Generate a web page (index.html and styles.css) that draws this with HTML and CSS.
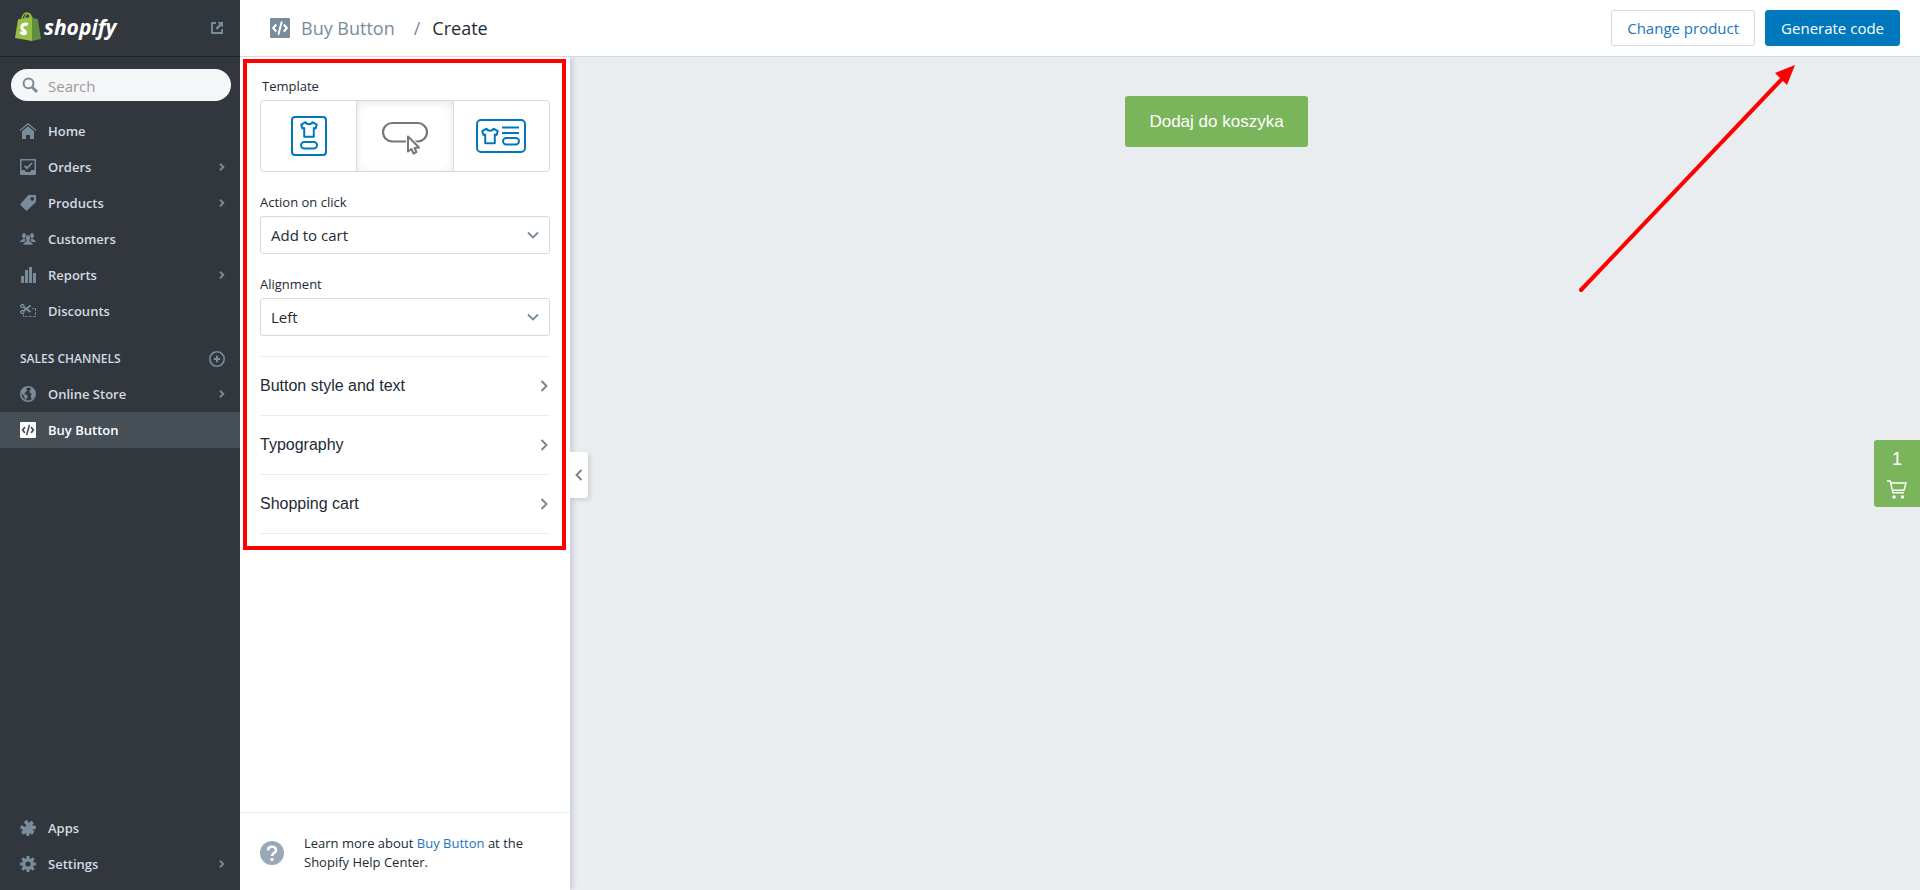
FILE: index.html
```html
<!DOCTYPE html>
<html lang="en">
<head>
<meta charset="utf-8">
<title>Buy Button / Create</title>
<link rel="stylesheet" href="styles.css">
</head>
<body>
<svg class="sprite" aria-hidden="true">
  <symbol id="chevron" viewBox="0 0 8 12"><path d="M1.500 1 6.500 6 1.500 11" fill="none" stroke="currentColor" stroke-width="1.900"/></symbol>
  <symbol id="nav-chevron" viewBox="0 0 6 8"><path d="M1 .8 4.3 4 1 7.2" fill="none" stroke="currentColor" stroke-width="1.9"/></symbol>
  <symbol id="code" viewBox="0 0 16 16"><path fill="currentColor" fill-rule="evenodd" d="M1 0h14a1 1 0 0 1 1 1v14a1 1 0 0 1-1 1H1a1 1 0 0 1-1-1V1a1 1 0 0 1 1-1zM4.300 4.600 1.500 8l2.800 3.400 1.300-1.100L3.700 8l1.900-2.300zM11.700 4.600l-1.300 1.100L12.300 8l-1.900 2.300 1.300 1.100L14.500 8zM8.700 2.600 5.900 13.100l1.500.4L10.200 3z"/></symbol>
  <symbol id="shirt" viewBox="0 0 18 17"><path d="M5.500 1.200 1.200 3.600 2.400 7.400 4.200 6.900V15.800H13.800V6.900L15.600 7.400 16.800 3.600 12.500 1.200C11.500 4 6.500 4 5.500 1.200Z" fill="none" stroke="currentColor" stroke-width="2" stroke-linejoin="round"/></symbol>
</svg>
<div class="app">
  <aside class="sidebar">
    <div class="brand">
      <a class="logo" href="#" aria-label="shopify">
        <svg width="26" height="29" viewBox="0 0 26 29" aria-hidden="true">
          <path d="M7 8C7 3 9.500.8 11.500.8S15 3.500 15.300 7M9.500 7C10 3 12 1.200 13.500 1.500S16.500 4 16.500 6" fill="none" stroke="#95bf47" stroke-width="1.300"/>
          <path d="M3 7.500 17 4.500V29L0 26Z" fill="#95bf47"/>
          <path d="M17 4.500 19 6.500 22.800 7 26 27 17 29Z" fill="#5e8e3e"/>
          <path d="M12.800 11.200C9.500 9.700 6.500 11.500 6.800 14.200S11 17.200 10.500 19.200 7.300 20 5.200 18.800" transform="translate(0 1.500)" fill="none" stroke="#fff" stroke-width="3"/>
        </svg>
        <span>shopify</span>
      </a>
      <a class="external" href="#" aria-label="View your website">
        <svg width="12" height="12" viewBox="0 0 12 12" aria-hidden="true"><path d="M5 1H1V11H11V7" fill="none" stroke="currentColor" stroke-width="1.900"/><path d="M6.500 0H12V5.500L10.200 3.700 6.200 7.700 4.600 6.100 8.500 2.100Z" fill="currentColor"/></svg>
      </a>
    </div>
    <label class="search">
      <svg width="17" height="17" viewBox="0 0 17 17" aria-hidden="true"><circle cx="6.500" cy="6.300" r="4.900" fill="none" stroke="currentColor" stroke-width="2"/><path d="M10 10 15 15" stroke="currentColor" stroke-width="3"/></svg>
      <input type="search" placeholder="Search" aria-label="Search">
    </label>
    <nav class="nav" aria-label="Main">
      <a href="#"><svg class="icon" viewBox="0 0 16 16"><path d="M0 7.600 8 .8 16 7.600" fill="none" stroke="currentColor" stroke-width="1.300"/><path d="M2 8.300 8 3.200 14 8.300V16H10V12H6V16H2Z" fill="currentColor"/></svg><span>Home</span></a>
      <a href="#"><svg class="icon" viewBox="0 0 16 16"><path fill="currentColor" fill-rule="evenodd" d="M1 0H15a1 1 0 0 1 1 1V15a1 1 0 0 1-1 1H1a1 1 0 0 1-1-1V1a1 1 0 0 1 1-1ZM1.500 1.500V11H4.500L6 13H10L11.500 11H14.500V1.500Z"/><path d="M4.500 6.800 7 9.200 12 4" fill="none" stroke="currentColor" stroke-width="1.800"/></svg><span>Orders</span><svg class="nav-arrow"><use href="#nav-chevron"/></svg></a>
      <a href="#"><svg class="icon" viewBox="0 0 16 16"><path fill="currentColor" fill-rule="evenodd" d="M8.500 0H16V7L6.500 16 0 9.500ZM12.200 2a1.900 1.900 0 1 0 .01 0Z"/></svg><span>Products</span><svg class="nav-arrow"><use href="#nav-chevron"/></svg></a>
      <a href="#"><svg class="icon" viewBox="0 0 16 16"><g fill="currentColor"><ellipse cx="4" cy="4.600" rx="2" ry="2.600"/><ellipse cx="12" cy="4.600" rx="2" ry="2.600"/><path d="M0 11C.2 9 3 9 3 7.500L5.500 8 5 10.500 3.500 11ZM16 11C15.800 9 13 9 13 7.500L10.500 8 11 10.500 12.500 11Z"/><path d="M8 4C5.500 4 5.300 6 6 8.500 6.700 10 6 10.700 4.500 11.200 3.500 11.500 3.200 12.500 3.200 14H12.800C12.800 12.500 12.500 11.500 11.500 11.200 10 10.700 9.300 10 10 8.500 10.700 6 10.500 4 8 4Z" stroke="#31373d" stroke-width=".6"/></g></svg><span>Customers</span></a>
      <a href="#"><svg class="icon" viewBox="0 0 16 16"><path fill="currentColor" d="M1 9H4V16H1ZM5 3H8V16H5ZM9 0H12V16H9ZM13 6H16V16H13Z"/></svg><span>Reports</span><svg class="nav-arrow"><use href="#nav-chevron"/></svg></a>
      <a href="#"><svg class="icon" viewBox="0 0 16 16"><g fill="none" stroke="currentColor"><ellipse cx="2.300" cy="3" rx="1.700" ry="1.500" stroke-width="1.300"/><ellipse cx="2.300" cy="9" rx="1.700" ry="1.500" stroke-width="1.300"/><path d="M3.600 4 10.500 9M3.600 8 10.500 2.500" stroke-width="2"/><path d="M12 5.500H13.500M14.500 5.500H15.500V8M15.500 9.500V12M15.500 13V13.500H13M11.500 13.500H9M7.500 13.500H5.500M4.500 13.500H3.500V11.500"/></g></svg><span>Discounts</span></a>
    </nav>
    <div class="section-title"><h2>SALES CHANNELS</h2><button type="button" aria-label="Add sales channel"><svg width="16" height="16" viewBox="0 0 16 16"><circle cx="8" cy="8" r="7.200" fill="none" stroke="currentColor" stroke-width="1.600"/><path d="M8 4.800V11.200M4.800 8H11.200" stroke="currentColor" stroke-width="2"/></svg></button></div>
    <nav class="nav" aria-label="Sales channels">
      <a href="#"><svg class="icon" viewBox="0 0 16 16"><circle cx="8" cy="8" r="7.200" fill="none" stroke="currentColor" stroke-width="1.600"/><path fill="currentColor" d="M1.500 5C3 2 5 1 7.500 1L6.200 3 7.500 4.500 5.500 6 4.500 8 7 9 8 11 6.500 12.500 6 14.500 4.500 12 4 9.800 2 8ZM10 1 14 4 15 8.500 13 12.500 11.500 13 10.500 10 12 8 10 7 9.500 4.500 11 3.500Z"/></svg><span>Online Store</span><svg class="nav-arrow"><use href="#nav-chevron"/></svg></a>
      <a class="current" href="#" aria-current="page"><svg class="icon"><use href="#code"/></svg><span>Buy Button</span></a>
    </nav>
    <nav class="nav nav-bottom" aria-label="Account">
      <a href="#"><svg class="icon" viewBox="0 0 16 16"><path fill="currentColor" d="M4.500 1.500C5.500-.5 8.500-.2 8.300 2L8.200 3.200 11.500.8 13.800 3 12 5.500C13.500 5.500 16 5 16 7.500S13.500 9.500 12.500 9L14.500 11.800 12 14.800 9.500 12.800C10.200 14.500 9.200 16 7.500 16S5.500 14 6.500 12.800L3.500 14.800 1 12.200 3 9.500 0 8.500 1 5.200 3.500 6C4 7 6.200 7.200 6.200 5.500S4.800 4.200 4.200 3.500Z"/></svg><span>Apps</span></a>
      <a href="#"><svg class="icon" viewBox="0 0 16 16"><g stroke="currentColor" fill="none"><circle cx="8" cy="8" r="4.300" stroke-width="3.400"/><path stroke-width="3" d="M8 0V3M8 13V16M0 8H3M13 8H16M2.300 2.300 4.400 4.400M11.600 11.600 13.700 13.700M2.300 13.700 4.400 11.600M11.600 4.400 13.700 2.300"/></g></svg><span>Settings</span><svg class="nav-arrow"><use href="#nav-chevron"/></svg></a>
    </nav>
  </aside>

  <div class="main">
    <header class="topbar">
      <h1 class="crumbs"><svg width="20" height="20" aria-hidden="true"><use href="#code"/></svg><a href="#">Buy Button</a><span class="slash">/</span><span>Create</span></h1>
      <div class="actions">
        <button class="btn" type="button">Change product</button>
        <button class="btn btn-primary" type="button">Generate code</button>
      </div>
    </header>
    <div class="workspace">
      <section class="panel" aria-label="Customize">
        <form class="settings">
          <fieldset class="field">
            <legend class="template-label">Template</legend>
            <div class="segments">
              <label><input type="radio" name="template" aria-label="Card">
                <svg class="blue" width="36" height="40" viewBox="0 0 36 40"><rect x="1" y="1" width="34" height="38" rx="3" fill="none" stroke="currentColor" stroke-width="2"/><use href="#shirt" x="9" y="5" width="18" height="17"/><rect x="10" y="26" width="16" height="6.500" rx="3.200" fill="none" stroke="currentColor" stroke-width="2"/></svg></label>
              <label><input type="radio" name="template" aria-label="Button only" checked>
                <svg class="gray" width="46" height="37" viewBox="0 -4 46 37"><rect x="1" y="1" width="44" height="18.500" rx="9.250" fill="none" stroke="currentColor" stroke-width="2.200"/><path d="M26 14.500V29.500L29.500 27 31.500 31.500 34.500 30.200 32.600 26 37 25.500Z" fill="#fff" stroke="#fff" stroke-width="4"/><path d="M26 14.500V29.500L29.500 27 31.500 31.500 34.500 30.200 32.600 26 37 25.500Z" fill="#fff" stroke="currentColor" stroke-width="2" stroke-linejoin="round"/></svg></label>
              <label><input type="radio" name="template" aria-label="Wide card">
                <svg class="blue" width="50" height="34" viewBox="0 0 50 34"><rect x="1" y="1" width="48" height="32" rx="4" fill="none" stroke="currentColor" stroke-width="2"/><use href="#shirt" x="5" y="8" width="18" height="18"/><path d="M26 8.500H43M26 14H43" stroke="currentColor" stroke-width="2"/><rect x="27" y="19" width="16" height="6.500" rx="3.200" fill="none" stroke="currentColor" stroke-width="2"/></svg></label>
            </div>
          </fieldset>
          <div class="field">
            <label for="action">Action on click</label>
            <div class="select"><select id="action"><option>Add to cart</option><option>Open product details</option></select><svg><use href="#chevron"/></svg></div>
          </div>
          <div class="field">
            <label for="alignment">Alignment</label>
            <div class="select"><select id="alignment"><option>Left</option><option>Center</option><option>Right</option></select><svg><use href="#chevron"/></svg></div>
          </div>
          <div class="rows">
            <button type="button">Button style and text<svg><use href="#chevron"/></svg></button>
            <button type="button">Typography<svg><use href="#chevron"/></svg></button>
            <button type="button">Shopping cart<svg><use href="#chevron"/></svg></button>
          </div>
          <div class="highlight"></div>
        </form>
        <footer class="help">
          <svg width="24" height="24" viewBox="0 0 24 24" aria-hidden="true"><circle cx="12" cy="12" r="12" fill="#9aa8b7"/><path d="M8 9.500C8 4.500 16 4.500 16 9.200 16 12 12 12 12 15" fill="none" stroke="#fff" stroke-width="2.600"/><circle cx="12" cy="18.400" r="1.600" fill="#fff"/></svg>
          <p>Learn more about <a href="#">Buy Button</a> at the<br>Shopify Help Center.</p>
        </footer>
        <button class="collapse" type="button" aria-label="Collapse panel"><svg><use href="#chevron"/></svg></button>
      </section>
      <main class="preview">
        <button class="add-to-cart" type="button">Dodaj do koszyka</button>
        <button class="cart" type="button" aria-label="Cart, 1 item"><span>1</span>
          <svg width="20" height="19" viewBox="0 0 20 19"><path d="M0 1H3.200L6 12.800H17M3.800 3H19L17 10.200H5.500" fill="none" stroke="currentColor" stroke-width="1.500"/><circle cx="7" cy="17" r="1.700" fill="currentColor"/><circle cx="15.500" cy="17" r="1.700" fill="currentColor"/></svg>
        </button>
      </main>
    </div>
    <svg class="arrow" width="220" height="232" viewBox="0 0 220 232" aria-hidden="true"><path d="M4 228 204 18" stroke="#f00" stroke-width="4" stroke-linecap="round"/><path d="M218 3 198 11 210 23Z" fill="#f00"/></svg>
  </div>
</div>
</body>
</html>
```

FILE: styles.css
```css
* { box-sizing: border-box; }
body { margin: 0; font: 14px/20px "Open Sans", "Noto Sans", sans-serif; color: #212b35; }
button, input, select { font: inherit; color: inherit; }
button { margin: 0; padding: 0; border: 0; background: none; cursor: pointer; }
a { color: inherit; text-decoration: none; }
svg { flex: none; display: block; }
.sprite { display: none; }

.app { display: grid; grid-template-columns: 240px 1fr; min-height: 100vh; }

/* Sidebar */
.sidebar { display: flex; flex-direction: column; background: #31373d; color: #d3dbe2; padding-bottom: 8px; }
.brand { display: flex; align-items: center; justify-content: space-between; height: 57px; padding: 0 17px 0 15px; border-bottom: 1px solid #212529; }
.logo { display: flex; align-items: center; gap: 3px; padding-bottom: 3px; }
.logo span { color: #fff; font-size: 21px; line-height: 28px; font-weight: 700; font-style: italic; }
.external { color: #798c9c; }
.search { display: flex; align-items: center; gap: 9px; height: 32px; margin: 12px 9px 12px 11px; padding: 0 11px; border-radius: 16px; background: #f5f6f7; color: #798c9c; }
.search input { flex: 1; min-width: 0; padding: 2px 0 0; border: 0; outline: 0; background: none; font-size: 15px; color: #31373d; }
.search input::placeholder { color: #9b9b9b; }
.nav a { display: flex; align-items: center; gap: 12px; height: 36px; padding: 0 15px 0 20px; font-size: 13px; font-weight: 600; }
.nav span { flex: 1; }
.nav .current { background: #464e56; color: #fff; }
.icon { width: 16px; height: 16px; color: #798c9c; }
.current .icon { color: #fff; }
.nav-arrow { width: 6px; height: 8px; color: #798c9c; }
.section-title { display: flex; align-items: center; justify-content: space-between; height: 47px; padding: 13px 15px 0 20px; }
.section-title h2 { margin: 0; font-size: 12px; font-weight: 600; }
.section-title button { color: #798c9c; }
.nav-bottom { margin-top: auto; }

/* Top bar */
.main { position: relative; display: flex; flex-direction: column; min-width: 0; }
.topbar { display: flex; align-items: center; justify-content: space-between; height: 57px; padding: 0 20px 0 30px; background: #fff; border-bottom: 1px solid #d3dbe2; }
.crumbs { display: flex; align-items: center; margin: 0; font-size: 18px; line-height: 24px; font-weight: 400; }
.crumbs svg { color: #798c9c; margin-right: 11px; }
.crumbs a, .slash { color: #798c9c; }
.slash { margin: 0 12px 0 19px; }
.actions { display: flex; gap: 10px; }
.btn { height: 36px; padding: 0 15px; border: 1px solid #d3dbe2; border-radius: 3px; background: #fff; color: #1b75bb; font-size: 15px; }
.btn-primary { background: #0078bd; border-color: #0078bd; color: #fff; }

/* Settings panel */
.workspace { flex: 1; display: grid; grid-template-columns: 330px 1fr; }
.panel { position: relative; z-index: 1; display: flex; flex-direction: column; background: #fff; box-shadow: 2px 0 6px rgba(33, 43, 53, .2); clip-path: inset(0 -30px 0 0); }
.settings { position: relative; padding: 19px 20px 16px; }
.field { margin: 0 0 20px; padding: 0; border: 0; }
.field > label, .template-label { display: block; padding: 0; margin-bottom: 4px; font-size: 13px; line-height: 20px; }
.template-label { padding-left: 2px; }
.segments { display: flex; height: 72px; border: 1px solid #d3dbe2; border-radius: 4px; }
.segments label { flex: 1; display: flex; align-items: center; justify-content: center; }
.segments label + label { border-left: 1px solid #d3dbe2; }
.segments label:has(:checked) { box-shadow: inset 0 2px 8px rgba(99, 115, 129, .18); }
.segments input { appearance: none; width: 0; height: 0; margin: 0; }
.blue { color: #0078bd; }
.gray { color: #777; }
.select { position: relative; }
.select select { appearance: none; width: 100%; height: 38px; padding: 0 30px 0 10px; border: 1px solid #d3dbe2; border-radius: 3px; background: #fff; font-size: 15px; }
.select svg { position: absolute; right: 13px; top: 13px; width: 8px; height: 12px; color: #798c9c; transform: rotate(90deg); pointer-events: none; }
.rows { border-top: 1px solid #ebeef0; font-family: "Liberation Sans", Arial, sans-serif; }
.rows button { display: flex; align-items: center; justify-content: space-between; width: 100%; height: 59px; padding-right: 2px; border-bottom: 1px solid #ebeef0; font-size: 16px; }
.rows svg, .collapse svg { width: 8px; height: 12px; color: #808080; }
.highlight { position: absolute; inset: 2px 4px 0 3px; border: 4px solid #f00; pointer-events: none; }
.help { display: flex; align-items: center; gap: 20px; margin-top: auto; padding: 21px 20px 18px; border-top: 1px solid #ebeef0; }
.help p { margin: 0; font-size: 13px; line-height: 19px; }
.help a { color: #1b75bb; }
.collapse { position: absolute; left: 100%; top: 395px; display: flex; align-items: center; justify-content: center; width: 18px; height: 46px; border-radius: 0 3px 3px 0; background: #fff; box-shadow: 2px 2px 4px rgba(33, 43, 53, .14); }
.collapse svg { transform: rotate(180deg); }

/* Preview */
.preview { position: relative; display: flex; justify-content: center; align-items: flex-start; padding: 39px 57px 0 0; background: #e9edf0; }
.add-to-cart, .cart { background: #7ab55c; color: #fff; font-family: "Liberation Sans", Arial, sans-serif; }
.add-to-cart { height: 51px; padding: 0 24px; border-radius: 3px; font-size: 17px; }
.cart { position: absolute; right: 0; top: 46%; display: flex; flex-direction: column; align-items: center; gap: 10px; padding: 8px 13px; border-radius: 3px 0 0 3px; font-size: 18px; line-height: 22px; }

.arrow { position: absolute; right: 123px; top: 62px; pointer-events: none; }
```
